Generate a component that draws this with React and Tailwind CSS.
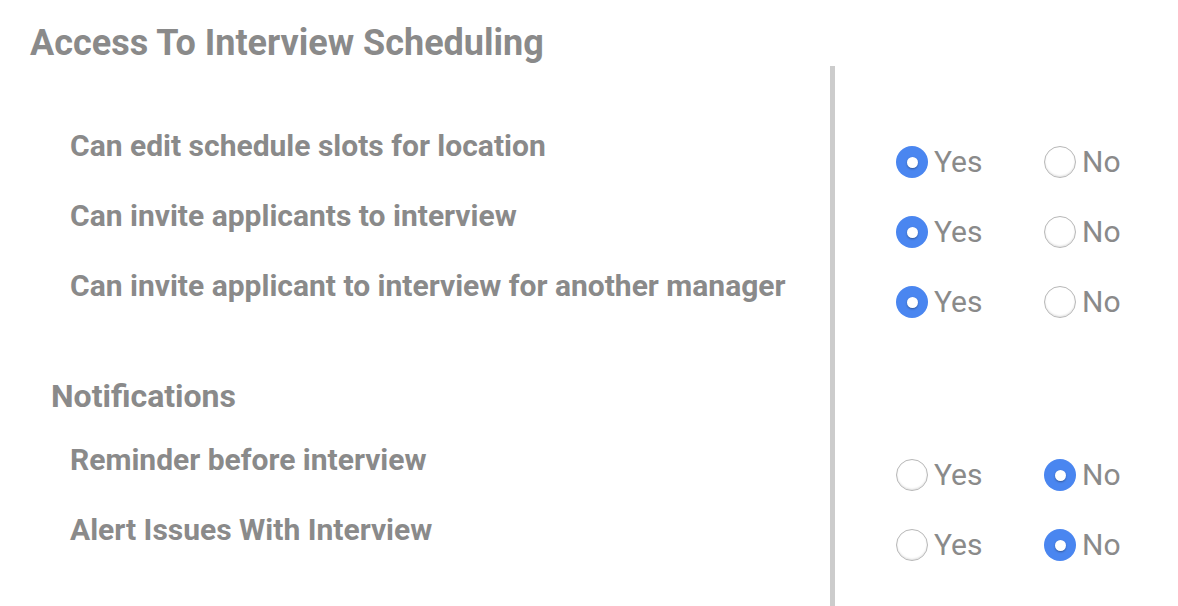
const access = [
  { label: "Can edit schedule slots for location", value: "yes" },
  { label: "Can invite applicants to interview", value: "yes" },
  { label: "Can invite applicant to interview for another manager", value: "yes" },
];

const notifications = [
  { label: "Reminder before interview", value: "no" },
  { label: "Alert Issues With Interview", value: "no" },
];

function Radio({ checked, text }) {
  return (
    <div className="flex items-center w-[148px] shrink-0">
      {checked ? (
        <span className="w-[32px] h-[32px] shrink-0 rounded-full bg-[#4a86f0] flex items-center justify-center">
          <span className="w-[11px] h-[11px] rounded-full bg-white shadow-[0_1px_2px_rgba(0,0,0,0.35)]" />
        </span>
      ) : (
        <span className="w-[32px] h-[32px] shrink-0 rounded-full bg-white border border-[#b8b8b8] shadow-[inset_0_-1px_2px_rgba(0,0,0,0.12)]" />
      )}
      <span className="ml-[6px] text-[30px] leading-none text-[#8a8a8a]">{text}</span>
    </div>
  );
}

function RadioRow({ value }) {
  return (
    <div className="h-[70px] flex items-center">
      <Radio checked={value === "yes"} text="Yes" />
      <Radio checked={value === "no"} text="No" />
    </div>
  );
}

function Label({ children }) {
  return (
    <div className="h-[70px] flex items-center pl-[70px] text-[30px] font-bold text-[#8a8a8a]">
      {children}
    </div>
  );
}

export default function App() {
  return (
    <div className="w-[1178px] h-[606px] bg-white overflow-hidden font-['Roboto',sans-serif]">
      <div className="h-[66px] pl-[30px] pt-[16px]">
        <h1 className="text-[36px] leading-[54px] font-bold text-[#8a8a8a]">Access To Interview Scheduling</h1>
      </div>

      <div className="flex h-[540px]">
        <div className="w-[830px] shrink-0 pt-[44px]">
          {access.map((r) => (
            <Label key={r.label}>{r.label}</Label>
          ))}
          <div className="mt-[56px] h-[40px] flex items-center pl-[51px] text-[32px] font-bold text-[#8a8a8a]">
            Notifications
          </div>
          <div className="mt-[8px]">
            {notifications.map((r) => (
              <Label key={r.label}>{r.label}</Label>
            ))}
          </div>
        </div>

        <div className="w-[5px] shrink-0 bg-[#cccccc]" />

        <div className="shrink-0 pl-[61px] pt-[61px]">
          {access.map((r) => (
            <RadioRow key={r.label} value={r.value} />
          ))}
          <div className="mt-[103px]">
            {notifications.map((r) => (
              <RadioRow key={r.label} value={r.value} />
            ))}
          </div>
        </div>
      </div>
    </div>
  );
}
